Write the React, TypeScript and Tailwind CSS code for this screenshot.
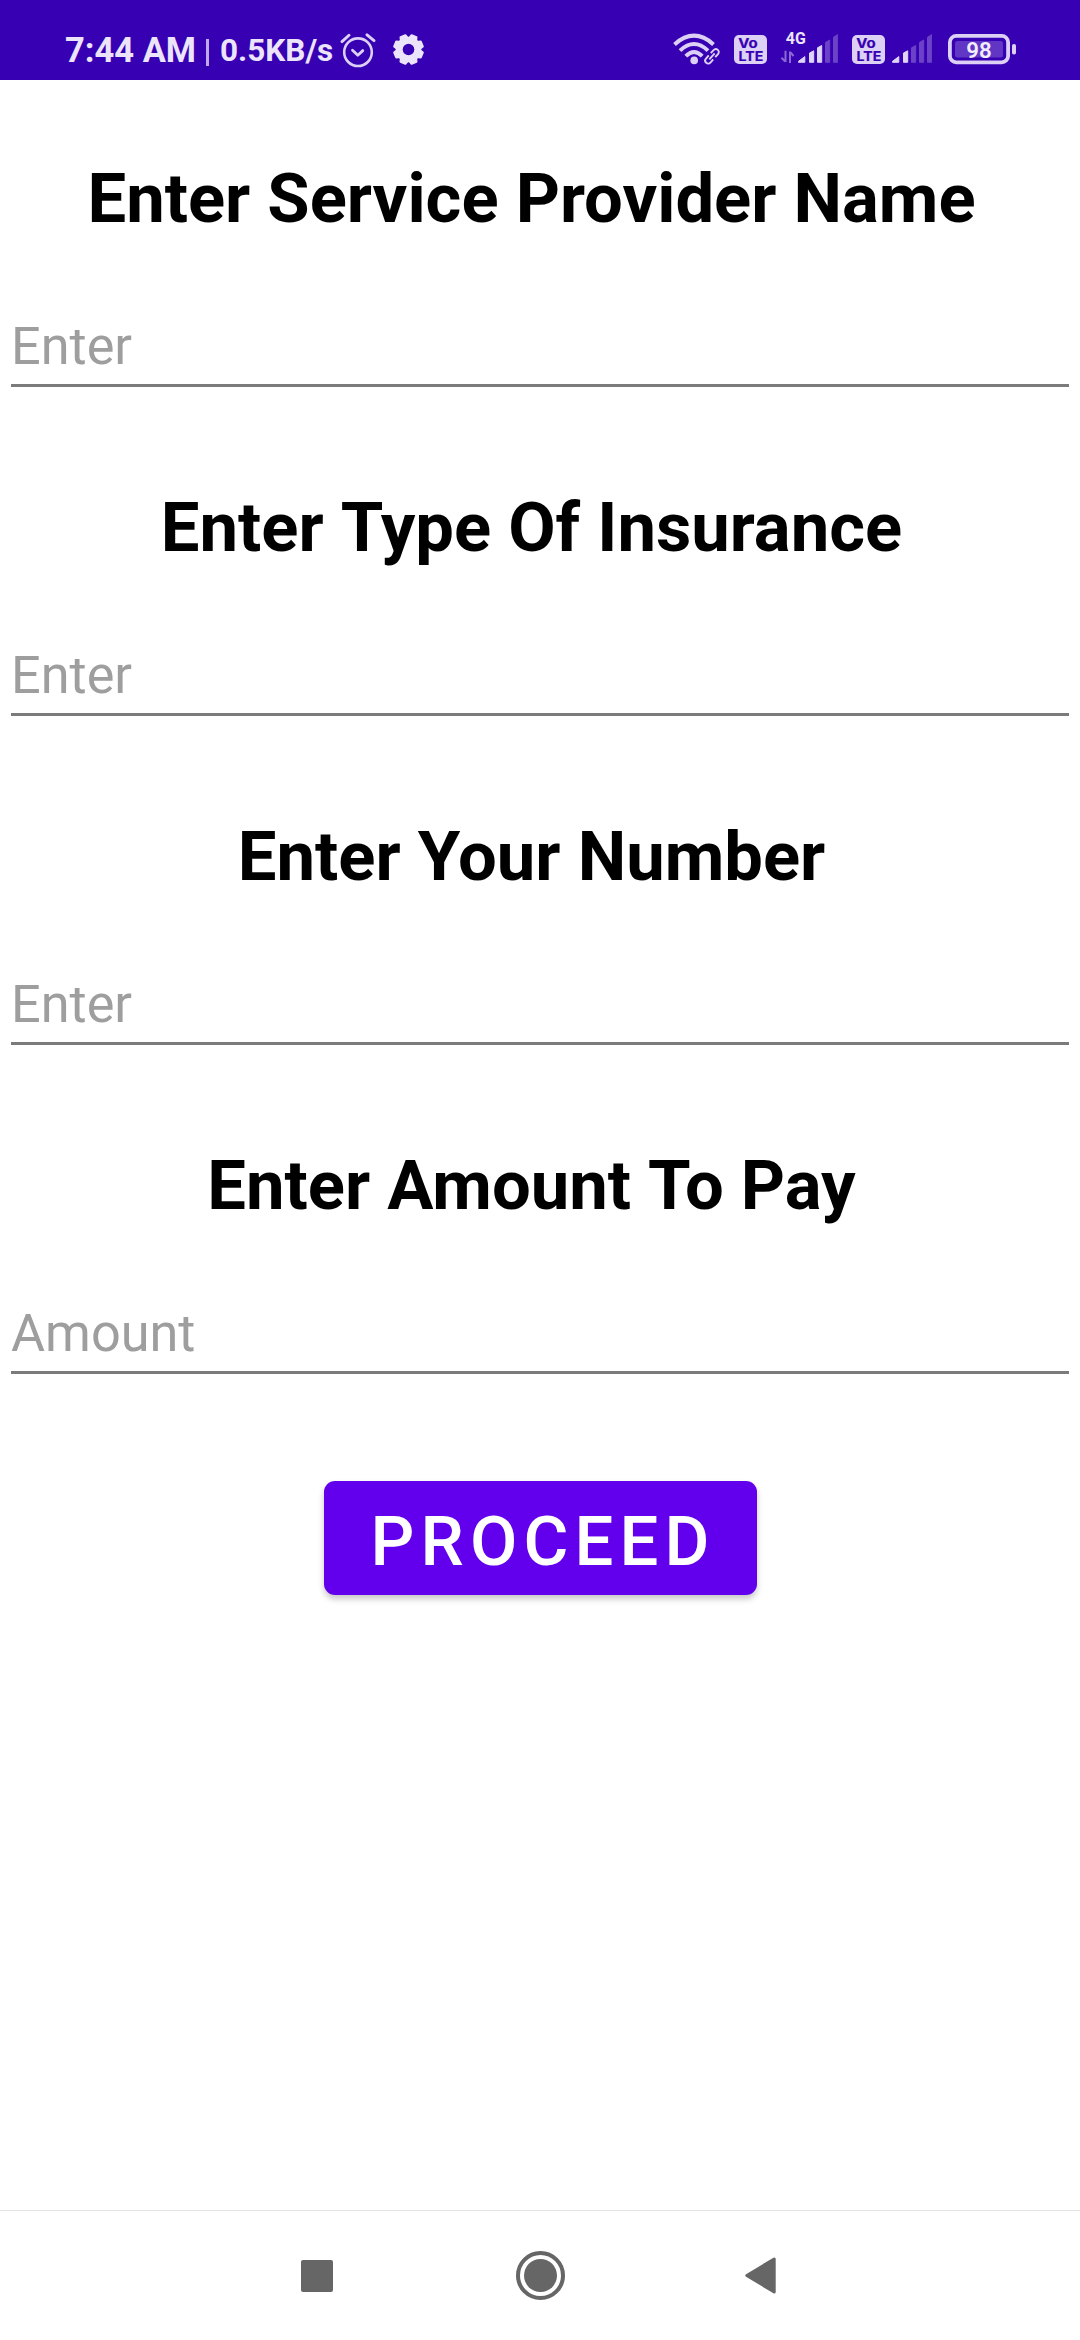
import type { ReactNode } from "react";

const fields = [
  { title: "Enter Service Provider Name", hint: "Enter" },
  { title: "Enter Type Of Insurance", hint: "Enter" },
  { title: "Enter Your Number", hint: "Enter" },
  { title: "Enter Amount To Pay", hint: "Amount" },
];

function AlarmIcon() {
  return (
    <svg className="ml-[7px] h-[36px] w-[36px] shrink-0" viewBox="0 0 36 36" fill="none" stroke="#dcd0f5" strokeLinecap="round" strokeLinejoin="round">
      <circle cx="18" cy="19.2" r="13.8" strokeWidth="2.6" />
      <path d="M12.5 17.2l5.3 5 5-4.6" strokeWidth="2.8" />
      <path d="M2 8.6l7-6.4M34 7.6l-7-5.8" strokeWidth="2.9" />
    </svg>
  );
}

function GearIcon() {
  return (
    <svg className="mt-[1px] ml-[17px] h-[31px] w-[31px] shrink-0" viewBox="-15.5 -15.5 31 31">
      <g fill="#ece4fb">
        {[0, 45, 90, 135, 180, 225, 270, 315].map((angle) => (
          <path key={angle} transform={`rotate(${angle + 22.5})`} d="M-5-10L-3.6-14.8Q-3.3-15.4-2.6-15.4L2.6-15.4Q3.3-15.4 3.6-14.8L5-10Z" />
        ))}
        <circle r="12.8" />
      </g>
      <circle r="5.8" fill="#3700b3" />
    </svg>
  );
}

function WifiIcon() {
  return (
    <svg className="h-[32px] w-[48px] shrink-0" viewBox="0 0 48 32" fill="none" stroke="#dcd0f5">
      <path d="M1.5 11.4Q21 -6 40.5 11.4" strokeWidth="4" />
      <path d="M7 17.6Q21 4.4 35 17.6" strokeWidth="4" />
      <path d="M12.8 23.2Q21 15 29.2 23.2" strokeWidth="4" />
      <circle cx="21.2" cy="27.4" r="3.8" fill="#dcd0f5" stroke="none" />
      <g transform="translate(39 23.3) rotate(-48)" strokeWidth="1.9">
        <path d="M-1.5 -3H-5.7A3 3 0 0 0 -5.7 3H-1.5" />
        <path d="M1.5 -3H5.7A3 3 0 0 1 5.7 3H1.5" />
        <path d="M-4 0H4" />
      </g>
    </svg>
  );
}

function VolteBadge({ className }: { className: string }) {
  return (
    <svg className={`h-[29px] w-[33px] shrink-0 ${className}`} viewBox="0 0 33 29">
      <rect width="33" height="29" rx="5" fill="#dcd0f5" />
      <g fill="#3700b3" stroke="#3700b3" strokeWidth="0.2" fontFamily="Inter, sans-serif" fontWeight="700">
        <text x="4.3" y="12.8" fontSize="13" textLength="19.4" lengthAdjust="spacingAndGlyphs">Vo</text>
        <text x="4.6" y="25.8" fontSize="13.2" textLength="24.6" lengthAdjust="spacingAndGlyphs">LTE</text>
      </g>
    </svg>
  );
}

function SignalBars({ active, className = "" }: { active: number; className?: string }) {
  const bars = [
    "M.5 28.3V27.3L6.8 22.6V28.3Z",
    "M11.5 28.3V19L15.7 16.8V28.3Z",
    "M19.5 28.3V13.8L23.7 11.5V28.3Z",
    "M27.5 28.3V8.4L31.7 6V28.3Z",
    "M35.5 28.3V3.2L39.7 .6V28.3Z",
  ];
  return (
    <svg className={`h-[29px] w-[40px] shrink-0 ${className}`} viewBox="0 0 40 29">
      {bars.map((d, i) => (
        <path key={d} d={d} fill={i < active ? "#dfd5f6" : "#6c42c8"} stroke={i < active ? "#dfd5f6" : "#6c42c8"} strokeWidth="1" strokeLinejoin="round" />
      ))}
    </svg>
  );
}

function MobileData() {
  return (
    <svg className="-mt-[5px] ml-[13px] h-[37px] w-[30px] shrink-0" viewBox="0 -5 30 37">
      <text x="5.8" y="11" fontFamily="Roboto, sans-serif" fontWeight="700" fontSize="16" fill="#ece4fb" textLength="20" lengthAdjust="spacingAndGlyphs">4G</text>
      <path d="M5.5 17.8V29M1.5 24.8L5.2 28.5M10 30V18.6M10 19L13.6 23" fill="none" stroke="#8b68d4" strokeWidth="2" />
    </svg>
  );
}

function Battery() {
  return (
    <svg className="mt-[1px] ml-[16px] h-[31px] w-[69px] shrink-0" viewBox="0 0 69 31">
      <rect x="1.9" y="1.9" width="58.2" height="26.4" rx="6.4" fill="none" stroke="#dcd0f5" strokeWidth="3.8" />
      <rect x="7" y="7" width="48" height="16.4" rx="2.5" fill="#6236c4" />
      <rect x="64" y="10" width="4" height="10.5" rx="1.8" fill="#dcd0f5" />
      <text x="18.3" y="23.6" fontFamily="Roboto, sans-serif" fontWeight="600" fontSize="22.5" fill="#f3eefd" textLength="25.4" lengthAdjust="spacingAndGlyphs">98</text>
    </svg>
  );
}

function StatusBar() {
  return (
    <header className="flex h-20 items-start bg-[#3700b3] pt-[33px] pr-[63px] pl-[65px] text-[#ece4fb]">
      <div className="flex items-start whitespace-nowrap">
        <span className="-mt-[3px] w-[141px] text-[34.5px] leading-[40px] font-bold">7:44 AM</span>
        <span className="mt-[6px] h-[27px] w-[3px] bg-[#bfa9ea]" />
        <span className="-mt-[2px] ml-[11px] w-[113px] text-[31.5px] leading-[40px] font-bold">0.5KB/s</span>
        <AlarmIcon />
        <GearIcon />
      </div>
      <div className="ml-auto flex items-start">
        <WifiIcon />
        <VolteBadge className="mt-[2px] ml-[13px]" />
        <MobileData />
        <SignalBars active={3} className="-ml-[12px] mt-[1px]" />
        <VolteBadge className="mt-[2px] ml-[14px]" />
        <SignalBars active={2} className="mt-[1px] ml-[7px]" />
        <Battery />
      </div>
    </header>
  );
}

function Field({ title, hint }: { title: string; hint: string }) {
  return (
    <section className="h-[329px]">
      <h2 className="flex h-[80px] justify-center gap-[17.1px] pr-[17px] text-[68.75px] leading-[80px] font-bold whitespace-nowrap text-black">
        {title.split(" ").map((word) => (
          <span key={word}>{word}</span>
        ))}
      </h2>
      <div className="mx-[11px] mt-[76px] border-b-[3px] border-[#7b7b7b]">
        <input
          placeholder={hint}
          aria-label={title}
          className="block h-[69px] w-full bg-transparent pb-[7px] text-[52.25px] leading-[62px] outline-none placeholder:text-[#9e9e9e]"
        />
      </div>
    </section>
  );
}

function NavButton({ label, className = "", children }: { label: string; className?: string; children: ReactNode }) {
  return (
    <button aria-label={label} className={`flex h-[53px] w-[53px] items-center justify-center ${className}`}>
      {children}
    </button>
  );
}

function NavigationBar() {
  return (
    <nav className="flex h-[130px] items-center border-t border-[#e4e4e4] pl-[290px]">
      <NavButton label="Recents">
        <span className="h-[32px] w-[32px] rounded-[2px] bg-[#666666]" />
      </NavButton>
      <NavButton label="Home" className="ml-[171px]">
        <svg className="h-[49px] w-[49px] shrink-0" viewBox="0 0 49 49">
          <circle cx="24.5" cy="24.5" r="22.5" fill="none" stroke="#666" strokeWidth="4" />
          <circle cx="24.5" cy="24.5" r="16.5" fill="#666" />
        </svg>
      </NavButton>
      <NavButton label="Back" className="ml-[167px]">
        <svg className="h-[37px] w-[31px]" viewBox="0 0 31 37">
          <path d="M29.2 2V35L1.8 18.5Z" fill="#666" stroke="#666" strokeWidth="3" strokeLinejoin="round" />
        </svg>
      </NavButton>
    </nav>
  );
}

export default function App() {
  return (
    <div className="flex h-[2340px] w-[1080px] flex-col overflow-hidden bg-white font-[Roboto,sans-serif]">
      <StatusBar />
      <main className="flex flex-1 flex-col pt-[79px]">
        {fields.map((field) => (
          <Field key={field.title} {...field} />
        ))}
        <button className="mt-[6px] h-[114px] w-[433px] self-center rounded-[11px] bg-[#6200ee] pt-[7px] pl-[6px] text-[68.75px] leading-[80px] font-medium tracking-[0.0892857em] text-white shadow-[0_4px_6px_rgba(0,0,0,0.22)]">
          PROCEED
        </button>
      </main>
      <NavigationBar />
    </div>
  );
}
